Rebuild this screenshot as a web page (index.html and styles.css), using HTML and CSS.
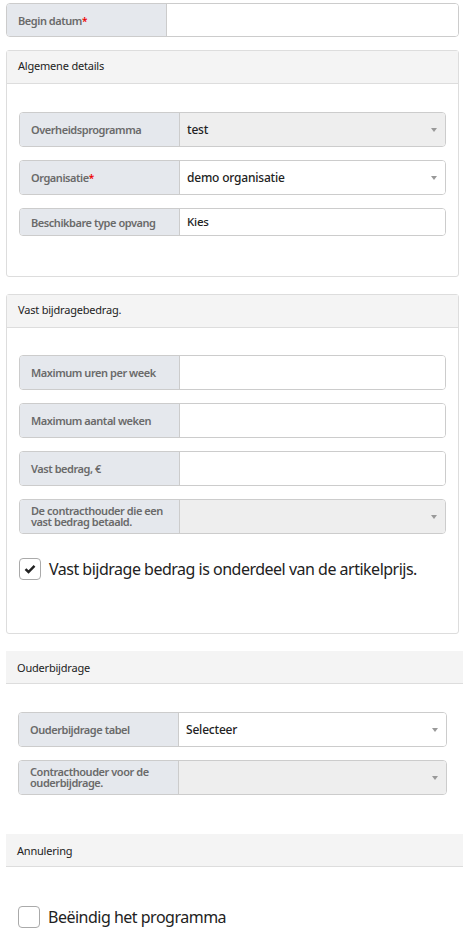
FILE: index.html
```html
<!DOCTYPE html>
<html lang="nl">
<head>
  <meta charset="UTF-8">
  <title>Programma</title>
  <link rel="stylesheet" href="styles.css">
</head>
<body>
  <div class="field top">
    <div class="field-label">Begin datum<span class="req">*</span></div>
    <div class="field-control"></div>
  </div>

  <div class="card">
    <div class="card-header">Algemene details</div>
    <div class="card-body">
      <div class="field">
        <div class="field-label">Overheidsprogramma</div>
        <div class="field-control select disabled">test<span class="caret"></span></div>
      </div>
      <div class="field">
        <div class="field-label">Organisatie<span class="req">*</span></div>
        <div class="field-control select">demo organisatie<span class="caret"></span></div>
      </div>
      <div class="field short">
        <div class="field-label">Beschikbare type opvang</div>
        <div class="field-control tag">Kies</div>
      </div>
    </div>
  </div>

  <div class="card">
    <div class="card-header">Vast bijdragebedrag.</div>
    <div class="card-body second">
      <div class="field">
        <div class="field-label">Maximum uren per week</div>
        <div class="field-control"></div>
      </div>
      <div class="field">
        <div class="field-label">Maximum aantal weken</div>
        <div class="field-control"></div>
      </div>
      <div class="field">
        <div class="field-label">Vast bedrag, €</div>
        <div class="field-control"></div>
      </div>
      <div class="field">
        <div class="field-label two-line">De contracthouder die een vast bedrag betaald.</div>
        <div class="field-control select disabled"><span class="caret"></span></div>
      </div>
      <label class="check">
        <span class="box">
          <svg width="12" height="10" viewBox="0 0 12 10"><path d="M1.5 5.2 L4.5 8 L10.5 1.8" fill="none" stroke="#222" stroke-width="2.4"/></svg>
        </span>
        Vast bijdrage bedrag is onderdeel van de artikelprijs.
      </label>
    </div>
  </div>

  <div class="section">
    <div class="section-header">Ouderbijdrage</div>
    <div class="section-body">
      <div class="field">
        <div class="field-label">Ouderbijdrage tabel</div>
        <div class="field-control select">Selecteer<span class="caret"></span></div>
      </div>
      <div class="field">
        <div class="field-label two-line">Contracthouder voor de ouderbijdrage.</div>
        <div class="field-control select disabled"><span class="caret"></span></div>
      </div>
    </div>
  </div>

  <div class="section">
    <div class="section-header">Annulering</div>
    <div class="section-body last">
      <label class="check">
        <span class="box"></span>
        Beëindig het programma
      </label>
    </div>
  </div>
</body>
</html>
```

FILE: styles.css
```css
body {
  margin: 0;
  padding: 3px 4px 0 6px;
  font-family: "Noto Sans", "Open Sans", sans-serif;
  color: #222;
  background: #fff;
}

.field {
  display: flex;
  height: 35px;
  border: 1px solid #ccc;
  border-radius: 4px;
  box-sizing: border-box;
  margin-bottom: 13px;
  overflow: hidden;
}

.field.top {
  height: 34px;
  margin-bottom: 13px;
}

.field.short {
  height: 28px;
  margin-bottom: 0;
}

.field-label {
  width: 160px;
  flex: none;
  box-sizing: border-box;
  background: #e5e8ed;
  border-right: 1px solid #ccc;
  padding: 0 10px 0 11px;
  display: flex;
  align-items: center;
  font-size: 11px;
  font-weight: 600;
  color: #6a6a6a;
  letter-spacing: -0.45px;
}

.field-label.two-line {
  line-height: 11px;
  padding-bottom: 2px;
}

.req {
  color: #e00;
  align-self: flex-start;
  margin-top: 10px;
  font-size: 10px;
}

.field-control {
  flex: 1;
  position: relative;
  background: #fff;
  display: flex;
  align-items: center;
  padding: 0 7px;
  font-size: 12px;
  font-weight: 500;
  color: #222;
  letter-spacing: -0.2px;
}

.field-control.disabled {
  background: #eee;
}

.field-control.tag {
  align-items: flex-start;
  padding-top: 5px;
  font-size: 11.5px;
}

.caret {
  position: absolute;
  right: 8px;
  top: 50%;
  margin-top: -2px;
  border-left: 3.5px solid transparent;
  border-right: 3.5px solid transparent;
  border-top: 4px solid #999;
}

.card {
  border: 1px solid #ddd;
  border-radius: 3px;
  margin-bottom: 17px;
}

.card-header,
.section-header {
  height: 32px;
  background: #f4f4f4;
  border-bottom: 1px solid #ddd;
  display: flex;
  align-items: center;
  padding: 0 11px;
  font-size: 11px;
  color: #222;
  letter-spacing: -0.2px;
}

.card-header {
  padding-bottom: 3px;
  box-sizing: border-box;
  height: 33px;
}

.card-body {
  padding: 28px 12px 40px;
}

.card-body.second {
  padding: 27px 12px 53px;
}

.section {
  margin-right: -4px;
}

.section-body {
  padding: 28px 16px 39px 12px;
}

.section-body .field:last-child {
  margin-bottom: 0;
}

.section-body.last {
  padding-top: 39px;
}

.check {
  display: flex;
  align-items: center;
  gap: 8px;
  font-size: 16px;
  letter-spacing: -0.5px;
  color: #222;
  margin-top: 24px;
}

.section-body.last .check {
  margin-top: 0;
}

.box {
  width: 20px;
  height: 20px;
  border: 1px solid #aaa;
  border-radius: 4px;
  display: flex;
  align-items: center;
  justify-content: center;
  flex: none;
}
```
